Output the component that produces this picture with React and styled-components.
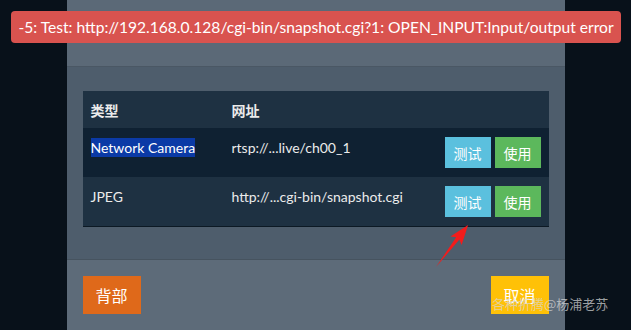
import React from 'react';
import styled, { createGlobalStyle } from 'styled-components';

const GlobalStyle = createGlobalStyle`
  body {
    margin: 0;
    background: #08111a;
    font-family: Lato, "Noto Sans CJK SC", sans-serif;
    color: #ebebeb;
  }
`;

const Page = styled.div`
  position: relative;
  width: 631px;
  height: 330px;
  overflow: hidden;
  display: flex;
  justify-content: center;
`;

const Modal = styled.div`
  width: 498px;
  display: flex;
  flex-direction: column;
  align-self: flex-start;
`;

const ModalHeader = styled.div`
  height: 66px;
  background: #5b6977;
  border-bottom: 1px solid #4a5764;
`;

const ModalBody = styled.div`
  background: #4e5d6c;
  padding: 24px 16px 32px;
`;

const ModalFooter = styled.div`
  background: #5d6b79;
  border-top: 1px solid #46535f;
  padding: 16px;
  display: flex;
  justify-content: space-between;
`;

const Table = styled.table`
  width: 100%;
  border-collapse: collapse;
  table-layout: fixed;
  border-bottom: 1px solid #0c1924;
`;

const Th = styled.th`
  box-sizing: border-box;
  width: ${(p) => p.w || 'auto'};
  height: 37px;
  padding: 0 8px;
  text-align: left;
  font-size: 14px;
  font-weight: bold;
  background: #1e3142;
`;

const Row = styled.tr`
  background: ${(p) => (p.dark ? '#0f2132' : '#1e3142')};
`;

const Td = styled.td`
  padding: 9px 8px;
  font-size: 14px;
  line-height: 21px;
  vertical-align: top;
  text-align: ${(p) => (p.right ? 'right' : 'left')};
  white-space: nowrap;
`;

const Selected = styled.span`
  background: #0b3aa6;
  color: #fff;
  padding: 1px 0;
`;

const SmallButton = styled.button`
  width: 46px;
  height: 31px;
  border: none;
  padding: 0;
  color: #fff;
  font-family: "Noto Sans CJK SC", sans-serif;
  font-size: 14px;
  background: ${(p) => (p.kind === 'info' ? '#5bc0de' : '#5cb85c')};

  & + & {
    margin-left: 4px;
  }
`;

const FooterButton = styled.button`
  width: 58px;
  height: 38px;
  border: none;
  padding: 0;
  color: #fff;
  font-family: "Noto Sans CJK SC", sans-serif;
  font-size: 16px;
  background: ${(p) => p.color};
`;

const Toast = styled.div`
  position: absolute;
  top: 11px;
  left: 11px;
  width: 610px;
  height: 32px;
  border-radius: 4px;
  background: #d9534f;
  color: #fff;
  font-size: 15.6px;
  display: flex;
  align-items: center;
  justify-content: center;
  white-space: nowrap;
`;

const Arrow = styled.svg`
  position: absolute;
  left: 0;
  top: 0;
  pointer-events: none;
`;

const Watermark = styled.div`
  position: absolute;
  left: 492px;
  top: 296px;
  font-family: "Noto Sans CJK SC", sans-serif;
  font-size: 13px;
  line-height: 16px;
  color: rgba(215, 215, 215, 0.72);
  white-space: nowrap;
`;

const sources = [
  { type: 'Network Camera', url: 'rtsp://...live/ch00_1', selected: true },
  { type: 'JPEG', url: 'http://...cgi-bin/snapshot.cgi' },
];

const App = () => (
  <Page>
    <GlobalStyle />
    <Modal>
      <ModalHeader />
      <ModalBody>
        <Table>
          <thead>
            <tr>
              <Th w="141px">类型</Th>
              <Th w="213px">网址</Th>
              <Th />
            </tr>
          </thead>
          <tbody>
            {sources.map((s, i) => (
              <Row key={s.type} dark={i === 0}>
                <Td>{s.selected ? <Selected>{s.type}</Selected> : s.type}</Td>
                <Td>{s.url}</Td>
                <Td right>
                  <SmallButton kind="info">测试</SmallButton>
                  <SmallButton kind="success">使用</SmallButton>
                </Td>
              </Row>
            ))}
          </tbody>
        </Table>
      </ModalBody>
      <ModalFooter>
        <FooterButton color="#df691a">背部</FooterButton>
        <FooterButton color="#ffc107">取消</FooterButton>
      </ModalFooter>
    </Modal>
    <Toast>-5: Test: http://192.168.0.128/cgi-bin/snapshot.cgi?1: OPEN_INPUT:Input/output error</Toast>
    <Arrow width="631" height="330">
      <polygon
        points="436,267 459.4,239.6 461.6,245 468.1,224.9 450.4,236.6 456.2,237.2"
        fill="#f21c1c"
      />
    </Arrow>
    <Watermark>各种折腾@杨浦老苏</Watermark>
  </Page>
);

export default App;
